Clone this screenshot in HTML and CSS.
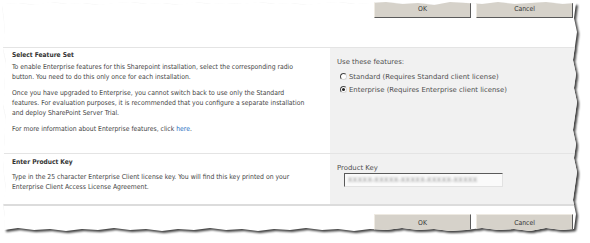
FILE: index.html
```html
<!DOCTYPE html>
<html lang="en">
<head>
    <meta charset="UTF-8">
    <title>Enable Features - SharePoint</title>
    <link rel="stylesheet" href="styles.css">
</head>
<body>
    <div class="sheet">
        <div class="paper">
            <div class="button-bar top-bar">
                <button class="btn" type="button">OK</button>
                <button class="btn" type="button">Cancel</button>
            </div>

            <div class="section section-features">
                <div class="section-text">
                    <h3>Select Feature Set</h3>
                    <p>To enable Enterprise features for this Sharepoint installation, select the corresponding radio<br>button. You need to do this only once for each installation.</p>
                    <p>Once you have upgraded to Enterprise, you cannot switch back to use only the Standard<br>features. For evaluation purposes, it is recommended that you configure a separate installation<br>and deploy SharePoint Server Trial.</p>
                    <p>For more information about Enterprise features, click <a href="#">here</a>.</p>
                </div>
                <div class="section-control">
                    <div class="control-label">Use these features:</div>
                    <label class="radio-row"><span class="radio"></span>Standard (Requires Standard client license)</label>
                    <label class="radio-row"><span class="radio checked"></span>Enterprise (Requires Enterprise client license)</label>
                </div>
            </div>

            <div class="section section-key">
                <div class="section-text">
                    <h3>Enter Product Key</h3>
                    <p>Type in the 25 character Enterprise Client license key. You will find this key printed on your<br>Enterprise Client Access License Agreement.</p>
                </div>
                <div class="section-control">
                    <div class="control-label">Product Key</div>
                    <div class="key-box"><span class="key-text">XXXXX-XXXXX-XXXXX-XXXXX-XXXXX</span></div>
                </div>
            </div>

            <div class="button-bar bottom-bar">
                <button class="btn" type="button">OK</button>
                <button class="btn" type="button">Cancel</button>
            </div>
        </div>
    </div>
</body>
</html>
```

FILE: styles.css
```css
* {
    margin: 0;
    padding: 0;
    box-sizing: border-box;
}

body {
    background: #ffffff;
    font-family: "DejaVu Sans Condensed", "DejaVu Sans", sans-serif;
    font-stretch: condensed;
    color: #444444;
}

/* torn paper + drop shadow */
.sheet {
    width: 590px;
    height: 243px;
    padding-left: 2px;
    filter: drop-shadow(2px 2px 1.2px rgba(0, 0, 0, 0.75));
}

.paper {
    width: 576px;
    height: 232px;
    background: #ffffff;
    clip-path: polygon(
        0 4px, 16px 3px, 32px 5px, 48px 2px, 64px 4px, 80px 3px, 96px 5px, 112px 3px,
        128px 2px, 144px 4px, 160px 3px, 176px 5px, 192px 2px, 208px 4px, 224px 3px,
        240px 4px, 256px 2px, 272px 4px, 288px 3px, 304px 5px, 320px 3px, 336px 2px,
        352px 4px, 368px 3px, 384px 2px, 400px 4px, 416px 3px, 432px 5px, 448px 2px,
        464px 3px, 480px 4px, 496px 2px, 512px 4px, 528px 3px, 544px 2px, 560px 4px,
        574px 3px,
        572px 18px, 575px 32px, 573px 46px, 571px 60px, 574px 74px, 572px 88px,
        575px 102px, 573px 116px, 571px 130px, 574px 144px, 572px 158px, 575px 172px,
        573px 186px, 571px 200px, 574px 214px, 572px 229px,
        560px 230px, 544px 228px, 528px 231px, 512px 229px, 496px 230px, 480px 228px,
        464px 230px, 448px 231px, 432px 229px, 416px 230px, 400px 228px, 384px 230px,
        368px 229px, 352px 231px, 336px 229px, 320px 230px, 304px 228px, 288px 230px,
        272px 229px, 256px 231px, 240px 229px, 224px 230px, 208px 228px, 192px 230px,
        176px 229px, 160px 231px, 144px 229px, 128px 230px, 112px 228px, 96px 230px,
        80px 229px, 64px 231px, 48px 229px, 32px 230px, 16px 228px, 2px 230px,
        3px 216px, 1px 202px, 4px 188px, 2px 174px, 1px 160px, 3px 146px, 2px 132px,
        4px 118px, 1px 104px, 3px 90px, 2px 76px, 4px 62px, 1px 48px, 3px 34px,
        2px 20px
    );
}

/* buttons */
.button-bar {
    display: flex;
    justify-content: flex-end;
    gap: 5px;
    padding-right: 5px;
}

.top-bar {
    height: 47px;
}

.bottom-bar {
    padding-top: 8px;
    border-top: 2px solid #dcdcdc;
}

.btn {
    width: 97px;
    height: 18px;
    background: #d6d2ca;
    border: 1px solid;
    border-color: #eeeae2 #5a5a5a #5a5a5a #eeeae2;
    font-family: "DejaVu Sans Condensed", "DejaVu Sans", sans-serif;
    font-stretch: condensed;
    font-size: 6.8px;
    color: #333333;
}

/* sections */
.section {
    display: grid;
    grid-template-columns: 328px 1fr;
    border-top: 1px solid #e4e4e4;
}

.section-features {
    height: 106px;
}

.section-key {
    height: 51px;
}

.section-text {
    padding: 2px 0 0 10px;
    font-size: 6.8px;
    line-height: 10px;
}

.section-key .section-text {
    padding-top: 3px;
}

.section-text h3 {
    font-size: 6.6px;
    font-weight: bold;
    color: #333333;
    margin-bottom: 2px;
}

.section-key .section-text h3 {
    margin-bottom: 5px;
}

.section-text p {
    margin-bottom: 6px;
}

.section-text a {
    color: #1f6fbf;
    text-decoration: none;
}

.section-control {
    background: #f1f1f1;
    padding: 9px 0 0 7px;
    font-family: "DejaVu Sans", sans-serif;
    font-stretch: normal;
    font-size: 6.9px;
    color: #4f4f4f;
}

.control-label {
    line-height: 10px;
    margin-bottom: 3px;
}

.radio-row {
    display: flex;
    align-items: center;
    height: 13px;
    padding-left: 3px;
}

.radio {
    width: 7px;
    height: 7px;
    margin-right: 2px;
    border-radius: 50%;
    border: 1px solid;
    border-color: #444444 #d8d8d8 #d8d8d8 #444444;
    background: #ffffff;
    display: flex;
    align-items: center;
    justify-content: center;
}

.radio.checked::after {
    content: "";
    width: 3px;
    height: 3px;
    border-radius: 50%;
    background: #222222;
}

.section-key .control-label {
    margin-bottom: 0;
}

.key-box {
    width: 159px;
    height: 14px;
    margin-left: 7px;
    background: #fafafa;
    border: 1px solid;
    border-color: #5a5a5a #e2e2e2 #e2e2e2 #5a5a5a;
    padding: 2px 0 0 3px;
    overflow: hidden;
}

.key-text {
    display: block;
    font-size: 6.5px;
    letter-spacing: 0.4px;
    color: #8a8a8a;
    filter: blur(0.9px);
    white-space: nowrap;
}
```
